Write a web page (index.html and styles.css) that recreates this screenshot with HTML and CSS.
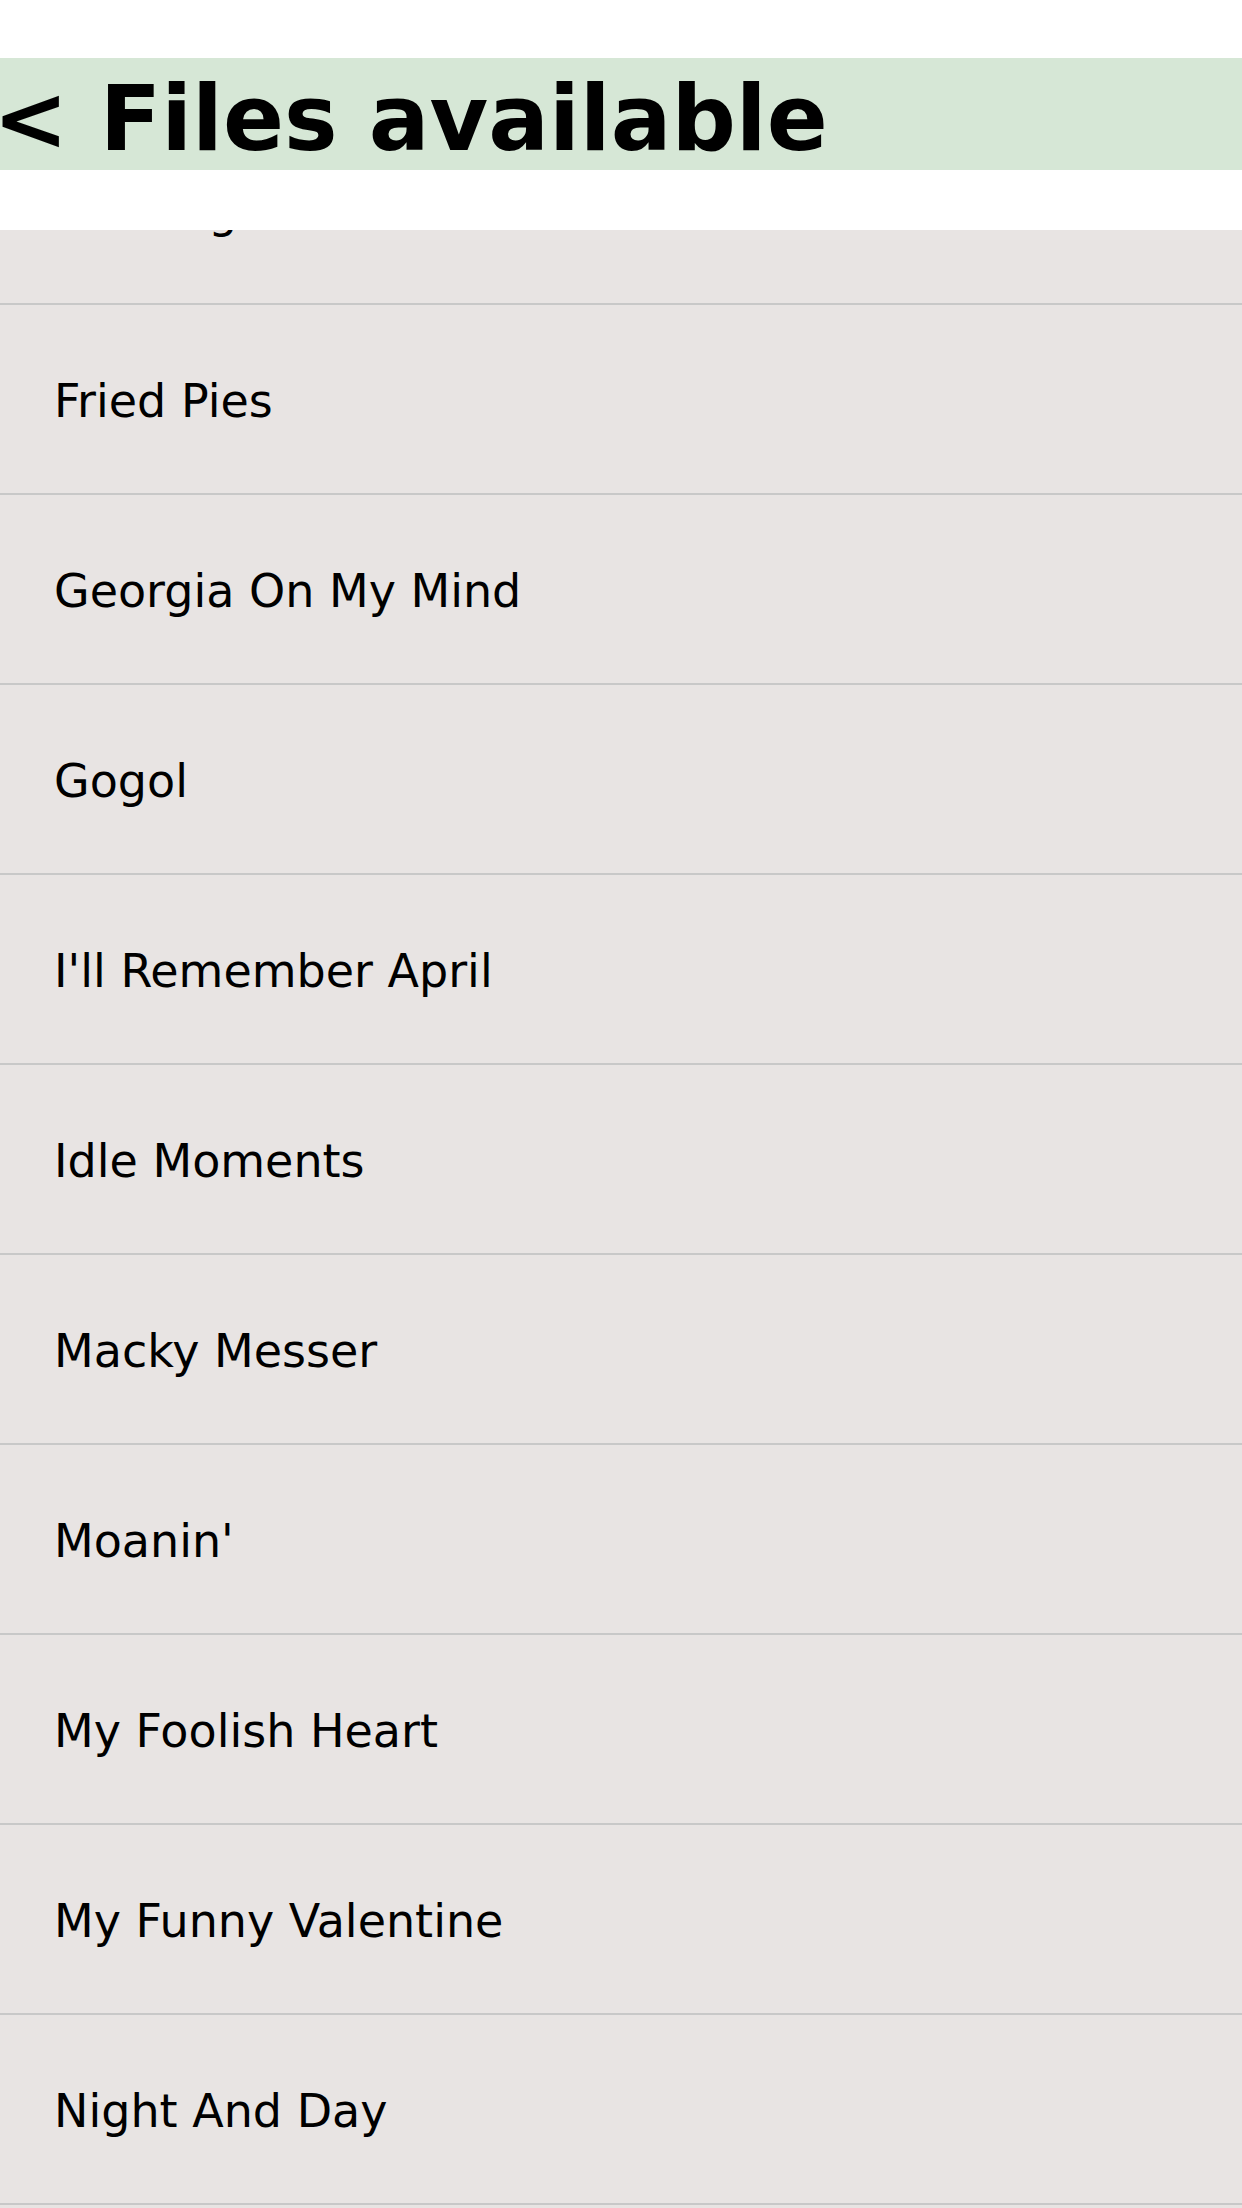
FILE: index.html
```html
<!DOCTYPE html>
<html lang="en">
<head>
    <meta charset="UTF-8">
    <meta name="viewport" content="width=device-width, initial-scale=1.0">
    <title>Files available</title>
    <link rel="stylesheet" href="styles.css">
</head>
<body>
    <header class="top">
        <h1 class="title">&lt; Files available</h1>
    </header>
    <main class="scroller">
        <ul class="files">
            <li>Flamingo</li>
            <li>Fried Pies</li>
            <li>Georgia On My Mind</li>
            <li>Gogol</li>
            <li>I'll Remember April</li>
            <li>Idle Moments</li>
            <li>Macky Messer</li>
            <li>Moanin'</li>
            <li>My Foolish Heart</li>
            <li>My Funny Valentine</li>
            <li>Night And Day</li>
            <li>Nostalgia</li>
        </ul>
    </main>
</body>
</html>
```

FILE: styles.css
```css
* {
    box-sizing: border-box;
  }

  :root {
    --bg: #ffffff;
    --bar: #d6e7d6;
    --row: #e8e4e3;
    --line: #c8c8c8;
    --text: #000000;
  }

  body {
    margin: 0;
    background-color: var(--bg);
    color: var(--text);
    font-family: "DejaVu Sans", Verdana, sans-serif;
    overflow: hidden;
    height: 100vh;
    display: flex;
    flex-direction: column;
  }

  .top {
    padding: 58px 0 60px;
  }

  .title {
    margin: 0;
    height: 112px;
    padding: 10px 0 0;
    background-color: var(--bar);
    font-size: 90px;
    font-weight: bold;
    line-height: 102px;
    text-indent: -7px;
    white-space: nowrap;
    overflow: hidden;
  }

  .scroller {
    flex: 1;
    overflow: hidden;
    background-color: var(--row);
  }

  .files {
    list-style: none;
    margin: -115px 0 0;
    padding: 0;

    & li {
      display: flex;
      align-items: center;
      height: 190px;
      padding: 4px 54px 0;
      border-bottom: 2px solid var(--line);
      font-size: 46px;
    }
  }
```
